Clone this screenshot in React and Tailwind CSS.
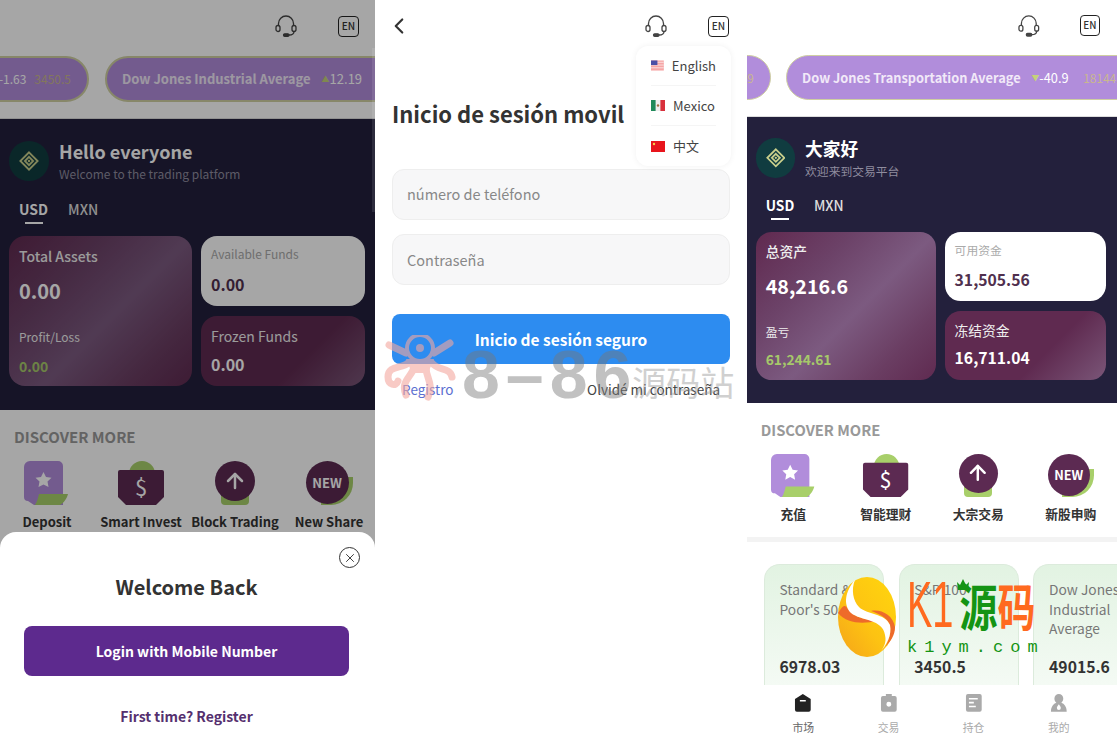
import { ChevronLeft, ArrowUp, X } from "lucide-react";

const FONT = "font-['Noto_Sans_CJK_SC','Noto_Sans',sans-serif]";

const EN_TEXT = {
  lead: { change: "-1.63", value: "3450.5" },
  leadOffset: "-ml-[111px]",
  name: "Dow Jones Industrial Average",
  arrow: "▲",
  change: "12.19",
  changeValue: "49015.6",
  hello: "Hello everyone",
  welcome: "Welcome to the trading platform",
  total: "Total Assets",
  totalValue: "0.00",
  profit: "Profit/Loss",
  profitValue: "0.00",
  available: "Available Funds",
  availableValue: "0.00",
  frozen: "Frozen Funds",
  frozenValue: "0.00",
  links: ["Deposit", "Smart Invest", "Block Trading", "New Share"],
};

const ZH_TEXT = {
  lead: { change: "", value: "49" },
  leadOffset: "-ml-[176px]",
  name: "Dow Jones Transportation Average",
  arrow: "▼",
  change: "-40.9",
  changeValue: "18144.5",
  hello: "大家好",
  welcome: "欢迎来到交易平台",
  total: "总资产",
  totalValue: "48,216.6",
  profit: "盈亏",
  profitValue: "61,244.61",
  available: "可用资金",
  availableValue: "31,505.56",
  frozen: "冻结资金",
  frozenValue: "16,711.04",
  links: ["充值", "智能理财", "大宗交易", "新股申购"],
};

const MARKETS = [
  { name: "Standard & Poor's 500", value: "6978.03" },
  { name: "S&P 100", value: "3450.5" },
  { name: "Dow Jones Industrial Average", value: "49015.6" },
];

function HeadsetIcon() {
  return (
    <svg width="24" height="24" viewBox="0 0 24 24" fill="none" stroke="#444" strokeWidth="1.3" strokeLinecap="round">
      <path d="M4.5 11.5V9.5a7.5 7.5 0 0 1 15 0v2" />
      <rect x="2" y="11.5" width="4" height="6" rx="2" />
      <rect x="18" y="11.5" width="4" height="6" rx="2" />
      <path d="M20 17.5c0 2.3-2.2 3.5-5 3.5" />
      <rect x="9.5" y="19.8" width="5.5" height="2.6" rx="1.3" fill="#444" />
    </svg>
  );
}

function LangBadge() {
  return (
    <span className="flex size-[21px] items-center justify-center rounded-[4px] border-[1.5px] border-[#222] text-[10px] font-medium leading-none text-[#333]">
      EN
    </span>
  );
}

function LogoMark() {
  return (
    <span className="flex size-10 shrink-0 items-center justify-center rounded-full bg-[#103c40]">
      <svg width="20" height="20" viewBox="0 0 22 22" fill="none" stroke="#c9cf8c" strokeWidth="2">
        <path d="M11 1.5 20.5 11 11 20.5 1.5 11Z" />
        <path d="M11 6.5 15.5 11 11 15.5 6.5 11Z" />
        <circle cx="11" cy="11" r="1.3" fill="#c9cf8c" stroke="none" />
      </svg>
    </span>
  );
}

function DepositIcon() {
  return (
    <svg width="46" height="44" viewBox="0 0 46 44">
      <path d="M6 0h28a5 5 0 0 1 5 5v39H10l-6-4a4 4 0 0 1-4-4V6a6 6 0 0 1 6-6Z" fill="#b18ddb" />
      <path d="M19.5 11l2.5 5 5.5.8-4 3.8 1 5.5-5-2.6-5 2.6 1-5.5-4-3.8 5.5-.8Z" fill="#fff" />
      <path d="M15 33h29c-1 4-4 9-8 11H11c2-3 3-7 4-11Z" fill="#a8cf6a" />
    </svg>
  );
}

function InvestIcon() {
  return (
    <svg width="48" height="44" viewBox="0 0 48 44">
      <circle cx="25" cy="13" r="13" fill="#a8cf6a" />
      <path d="M3 9h42a2 2 0 0 1 2 2v25l-8 8H9l-8-8V11a2 2 0 0 1 2-2Z" fill="#5c2a52" />
      <text x="24" y="35" textAnchor="middle" fontSize="22" fill="#fff" fontFamily="Noto Sans CJK SC, sans-serif">$</text>
    </svg>
  );
}

function BlockIcon() {
  return (
    <span className="relative block h-11 w-10">
      <span className="absolute bottom-0 left-[6px] h-4 w-7 rounded-b-sm bg-[#a8cf6a]" />
      <span className="absolute left-0 top-0 flex size-10 items-center justify-center rounded-full bg-[#5c2a52]">
        <ArrowUp size={24} color="#fff" strokeWidth={2.5} />
      </span>
    </span>
  );
}

function NewIcon() {
  return (
    <span className="relative block h-11 w-[47px]">
      <span className="absolute right-0 top-4 h-7 w-8 rounded-br-[22px] bg-[#a8cf6a]" />
      <span className="absolute left-0 top-0 flex h-[43px] w-[43px] items-center justify-center rounded-full bg-[#5c2a52] text-[13px] font-bold text-white">
        NEW
      </span>
    </span>
  );
}

const LINK_ICONS = [DepositIcon, InvestIcon, BlockIcon, NewIcon];

function TickerRow({ text }) {
  return (
    <div className="flex h-[46px] gap-4 overflow-hidden">
      <div className={`flex w-[200px] shrink-0 items-center justify-end gap-[8px] rounded-full border-2 border-[#cfcfa2] bg-[#b18ddb] pr-4 text-[12px] ${text.leadOffset}`}>
        <span className="text-white">{text.lead.change}</span>
        <span className="text-[#c9b78f]">{text.lead.value}</span>
      </div>
      <div className="flex w-[420px] shrink-0 items-center gap-[11px] rounded-full border-2 border-[#cfcfa2] bg-[#b18ddb] pl-[15px] text-[13px] font-bold text-[#f1e9f8]">
        <span className="whitespace-nowrap">{text.name}</span>
        <span className="flex items-center whitespace-nowrap text-[13px] font-normal text-white">
          <span className="text-[8px] text-[#c5d27a]">{text.arrow}</span>
          {text.change}
        </span>
        <span className="pl-1 text-[12px] font-normal text-[#c9b78f]">{text.changeValue}</span>
      </div>
    </div>
  );
}

function AssetCards({ text }) {
  return (
    <div className="mt-[12px] grid grid-cols-[183px_164px] gap-x-[9px] gap-y-[10px]">
      <div className="row-span-2 flex h-[150px] flex-col rounded-2xl bg-[linear-gradient(135deg,#60294f_0%,#6c4268_30%,#7c5a80_55%,#6a3d62_80%,#5f2a50_100%)] px-[10px] pt-[10px]">
        <p className="text-[14px] font-medium leading-5 text-[#eee]">{text.total}</p>
        <p className="mt-[11px] text-[20px] font-bold leading-7 text-white">{text.totalValue}</p>
        <p className="mt-[22px] text-[12px] leading-5 text-[#eee]">{text.profit}</p>
        <p className="mt-[9px] text-[14px] font-bold leading-5 text-[#a6c96a]">{text.profitValue}</p>
      </div>
      <div className="h-[70px] rounded-2xl bg-white px-[10px] pt-[9px]">
        <p className="text-[12px] leading-[18px] text-[#aaa]">{text.available}</p>
        <p className="mt-[9px] text-[16px] font-bold leading-6 text-[#50304e]">{text.availableValue}</p>
      </div>
      <div className="h-[70px] rounded-2xl bg-[linear-gradient(135deg,#5f2a50_0%,#5f2a50_62%,#7a5678_100%)] px-[10px] pt-[10px]">
        <p className="text-[14px] leading-5 text-[#eee]">{text.frozen}</p>
        <p className="mt-[6px] text-[16px] font-bold leading-6 text-white">{text.frozenValue}</p>
      </div>
    </div>
  );
}

function MarketCards() {
  return (
    <div className="flex gap-[15px] overflow-hidden pl-[17px] pt-[22px]">
      {MARKETS.map((m) => (
        <div
          key={m.name}
          className="flex h-[150px] w-[122px] shrink-0 flex-col rounded-t-2xl border border-b-0 border-[#dcebdc] bg-[linear-gradient(180deg,#e2f3e2_0%,#f8fcf8_100%)] px-[15px] pt-[16px]"
        >
          <p className="h-[68px] text-[14px] leading-[19.5px] text-[#777]">{m.name}</p>
          <p className="mt-[8px] text-[16px] font-bold leading-6 text-[#333]">{m.value}</p>
        </div>
      ))}
    </div>
  );
}

function TabBar() {
  const tabs = [
    { label: "市场", color: "#222", active: true, icon: <path d="M10 1 2 6v11a2 2 0 0 0 2 2h12a2 2 0 0 0 2-2V6Zm-3 6h6v1.6H7Z" fillRule="evenodd" /> },
    { label: "交易", color: "#aaa", icon: <path d="M7 1h6v2h3a2 2 0 0 1 2 2v12a2 2 0 0 1-2 2H4a2 2 0 0 1-2-2V5a2 2 0 0 1 2-2h3Zm3 8a2.5 2.5 0 1 0 0 5 2.5 2.5 0 0 0 0-5Z" fillRule="evenodd" /> },
    { label: "持仓", color: "#aaa", icon: <path d="M4 1h12a2 2 0 0 1 2 2v14a2 2 0 0 1-2 2H4a2 2 0 0 1-2-2V3a2 2 0 0 1 2-2Zm1 4v1.6h9V5Zm0 4v1.6h5V9Zm0 4v1.6h7V13Z" fillRule="evenodd" /> },
    { label: "我的", color: "#aaa", icon: <path d="M10 1a4.5 4.5 0 0 1 4.5 4.5c0 2-1 3.5-2 4.5 3 1 5.5 4 5.5 9H2c0-5 2.500-8 5.500-9-1-1-2-2.500-2-4.500A4.500 4.500 0 0 1 10 1Zm0 10.500c-1 1.500-2 2.500-2 3.700a2 2 0 0 0 4 0c0-1.200-1-2.200-2-3.700Z" fillRule="evenodd" /> },
  ];
  return (
    <div className="flex h-[53px] shrink-0 bg-white pl-[14px] pr-[16px] pt-[8px]">
      {tabs.map((tab) => (
        <div key={tab.label} className="flex flex-1 flex-col items-center">
          <svg width="20" height="20" viewBox="0 0 20 20" fill={tab.color}>{tab.icon}</svg>
          <span className={`mt-[8px] text-[11px] leading-4 ${tab.active ? "text-[#666]" : "text-[#aaa]"}`}>{tab.label}</span>
        </div>
      ))}
    </div>
  );
}

function HomeScreen({ text, full }) {
  return (
    <div className="flex h-full w-[376px] flex-col bg-white">
      <div className="flex-1 overflow-hidden">
        <div className="flex h-[56px] items-center justify-end gap-[40px] pb-[6px] pr-[17px] pt-[2px]">
          <HeadsetIcon />
          <LangBadge />
        </div>
        <TickerRow text={text} />
        <div className="mt-[16px] h-[292px] border-t border-[#ddd] bg-[#23203c] px-[9px] pt-[20px]">
          <div className="flex items-center gap-[10px]">
            <LogoMark />
            <div>
              <p className="text-[18px] font-bold leading-6 text-white">{text.hello}</p>
              <p className="mt-[3px] text-[12px] leading-4 text-[#8f8c9f]">{text.welcome}</p>
            </div>
          </div>
          <div className="mt-[17px] flex gap-[20px] pl-[10px] text-[14px] font-medium leading-5 text-[#ddd]">
            <span className="flex flex-col items-center font-bold text-white">
              USD
              <span className="mt-[3px] h-[2px] w-[18px] bg-white" />
            </span>
            <span>MXN</span>
          </div>
          <AssetCards text={text} />
        </div>
        <p className="mt-[17px] px-[14px] text-[15px] font-bold leading-5 text-[#999]">DISCOVER MORE</p>
        <div className="mt-[14px] grid grid-cols-4">
          {text.links.map((label, i) => {
            const Icon = LINK_ICONS[i];
            return (
              <div key={label} className="flex flex-col items-center">
                <span className="flex h-11 items-center"><Icon /></span>
                <span className="mt-[7px] whitespace-nowrap text-[13px] font-bold leading-5 text-[#333]">{label}</span>
              </div>
            );
          })}
        </div>
        {full && (
          <>
            <div className="mt-[14px] h-[5px] bg-[#f3f3f3]" />
            <MarketCards />
          </>
        )}
      </div>
      {full && <TabBar />}
    </div>
  );
}

function WelcomeSheet() {
  return (
    <div className="absolute inset-x-0 bottom-0 flex h-[205px] flex-col items-center rounded-t-2xl bg-white pl-[24px] pr-[26px]">
      <span className="absolute right-[15px] top-[15px] flex size-[21px] items-center justify-center rounded-full border-[1.5px] border-[#333]">
        <X size={14} color="#333" strokeWidth={1.6} />
      </span>
      <p className="mt-[41px] text-[20px] font-bold leading-7 text-[#333]">Welcome Back</p>
      <button className="mt-[25px] h-[50px] w-full rounded-lg bg-[#5d2a8e] text-[14px] font-bold text-white">
        Login with Mobile Number
      </button>
      <p className="mt-[30px] text-[14px] font-bold leading-5 text-[#55306f]">First time? Register</p>
    </div>
  );
}

function LoginScreen() {
  return (
    <div className="relative h-full w-[372px] shrink-0 overflow-hidden bg-white px-[17px]">
      <div className="flex h-[52px] items-center justify-between">
        <ChevronLeft size={26} color="#333" strokeWidth={2} className="-ml-[6px]" />
        <div className="flex items-center gap-[40px] pr-[1px]">
          <HeadsetIcon />
          <LangBadge />
        </div>
      </div>
      <h1 className="mt-[46px] text-[22px] font-bold leading-[30px] text-[#333]">Inicio de sesión movil</h1>
      <div className="mt-[41px] flex h-[51px] items-center rounded-xl border border-[#eee] bg-[#f7f7f8] px-[14px] pb-[2px] text-[14.5px] text-[#888]">
        número de teléfono
      </div>
      <div className="mt-[14px] flex h-[51px] items-center rounded-xl border border-[#eee] bg-[#f7f7f8] px-[14px] text-[14.5px] text-[#888]">
        Contraseña
      </div>
      <button className="mt-[29px] h-[50px] w-full rounded-lg bg-[#2d8cf0] pt-[2px] text-[15.5px] font-bold text-white">
        Inicio de sesión seguro
      </button>
      <div className="mt-[15px] flex justify-between px-[10px] text-[13.5px] leading-5">
        <span className="text-[#5b6fd0]">Registro</span>
        <span className="text-[#444]">Olvidé mi contraseña</span>
      </div>

      <div className="absolute left-[261px] top-[46px] w-[95px] rounded-xl bg-white px-[15px] shadow-[0_0_6px_rgba(0,0,0,0.06)]">
        <LangRow label="English" flag="us" border />
        <LangRow label="Mexico" flag="mx" border />
        <LangRow label="中文" flag="cn" />
      </div>

      <EightSixMark />
    </div>
  );
}

function Flag({ kind }) {
  if (kind === "us") {
    return (
      <svg width="14" height="11" viewBox="0 0 14 11">
        <rect width="14" height="11" fill="#f6a5a5" />
        <path d="M0 2h14M0 5h14M0 8h14" stroke="#fbe3e3" strokeWidth="1" />
        <rect width="7" height="5" fill="#4a4fa6" />
      </svg>
    );
  }
  if (kind === "mx") {
    return (
      <svg width="14" height="11" viewBox="0 0 14 11">
        <rect width="14" height="11" fill="#eee" />
        <rect width="4.6" height="11" fill="#1f8a5a" />
        <rect x="9.4" width="4.6" height="11" fill="#d8303c" />
        <circle cx="7" cy="5.5" r="1.2" fill="#a07040" />
      </svg>
    );
  }
  return (
    <svg width="14" height="11" viewBox="0 0 14 11">
      <rect width="14" height="11" fill="#e8141c" />
      <circle cx="3" cy="3" r="1.2" fill="#f6d04d" />
    </svg>
  );
}

function LangRow({ label, flag, border }) {
  return (
    <div className={`flex h-10 items-center gap-[8px] text-[13px] text-[#444] ${border ? "border-b border-[#f5f5f5]" : ""}`}>
      <Flag kind={flag} />
      {label}
    </div>
  );
}

// site stamp burned into the screenshot, sits on top of the login form
function EightSixMark() {
  return (
    <div className="pointer-events-none absolute left-[9px] top-[333px] flex h-[70px] w-[356px] items-end">
      <svg width="72" height="68" viewBox="0 0 72 68" fill="none" stroke="#f4a79f" strokeWidth="7" strokeLinecap="round" className="opacity-60">
        <circle cx="36" cy="13" r="13" strokeWidth="4" />
        <circle cx="36" cy="13" r="4" fill="#f4a79f" stroke="none" />
        <path d="M24 28c-6 6-20 2-20 14 0 8 8 10 10 4M30 32c-2 10-14 14-8 28M42 32c0 12 8 16 2 30M48 28c6 8 18 4 20 14M50 18 66 8M22 18 5 10" />
        <path d="M22 24h28l-6 14H28Z" fill="#f4a79f" stroke="none" />
      </svg>
      <span className="ml-[6px] font-['Liberation_Sans',sans-serif] text-[68px] font-bold leading-[58px] tracking-[6px] text-[#777] opacity-45">8–86</span>
      <span className="-ml-[5px] pb-[2px] text-[34px] leading-[38px] text-[#999] opacity-45">源码站</span>
    </div>
  );
}

// second stamp, bottom of the right phone
function K1Mark() {
  return (
    <div className="pointer-events-none absolute left-[90px] top-[577px] flex items-start">
      <svg width="60" height="80" viewBox="0 0 60 80">
        <defs>
          <linearGradient id="egg" x1="1" y1="0" x2="0" y2="1">
            <stop offset="0" stopColor="#ffd60e" />
            <stop offset="0.55" stopColor="#fdc312" />
            <stop offset="1" stopColor="#f5a31a" />
          </linearGradient>
        </defs>
        <ellipse cx="30" cy="40" rx="29" ry="40" fill="url(#egg)" />
        <path d="M1 36C6 28 8 27 11 32 18 42 30 42 40 44 26 47 10 47 1 36Z" fill="#ee6b2a" />
        <path d="M58 50C56 38 44 32 34 34 40 36 50 40 53 48 54 56 52 64 48 70 54 64 58 58 58 50Z" fill="#ee6b2a" />
        <path d="M18 3C8 14 6 28 14 36 24 44 46 42 48 58 50 66 46 72 42 76 50 68 55 58 53 48 48 36 30 38 22 30 16 24 14 12 18 3Z" fill="#fff" />
      </svg>
      <div className="ml-[10px] flex flex-col items-start">
        <div className="relative flex h-[56px] items-center text-[38px] leading-none">
          <span className="inline-block scale-y-[1.72] pr-[6px] font-['Liberation_Sans',sans-serif] text-[#ff6a1f]">K1</span>
          <span className="inline-block scale-y-[1.32] font-bold text-[#149414]">源</span>
          <span className="inline-block scale-y-[1.32] font-bold text-[#ff6a1f]">码</span>
          <svg width="14" height="13" viewBox="0 0 14 13" fill="#149414" className="absolute left-[49px] top-[1px]">
            <path d="M1 4l3 3 3-6 3 6 3-3-1 8H2Z" />
          </svg>
        </div>
        <span className="mt-[5px] font-['Liberation_Mono',monospace] text-[17px] leading-5 tracking-[7px] text-[#149414]">k1ym.com</span>
      </div>
    </div>
  );
}

export default function App() {
  return (
    <div className={`flex h-[737px] w-[1117px] overflow-hidden bg-white ${FONT}`}>
      <div className="relative h-full w-[375px] shrink-0 overflow-hidden">
        <HomeScreen text={EN_TEXT} />
        <div className="absolute inset-0 bg-black/35" />
        <div className="absolute right-0 top-[48px] h-[164px] w-[3px] bg-white/10" />
        <WelcomeSheet />
      </div>
      <LoginScreen />
      <div className="relative h-full w-[370px] shrink-0 overflow-hidden">
        <div className="h-[749px] [zoom:0.984]">
          <HomeScreen text={ZH_TEXT} full />
        </div>
        <K1Mark />
      </div>
    </div>
  );
}
